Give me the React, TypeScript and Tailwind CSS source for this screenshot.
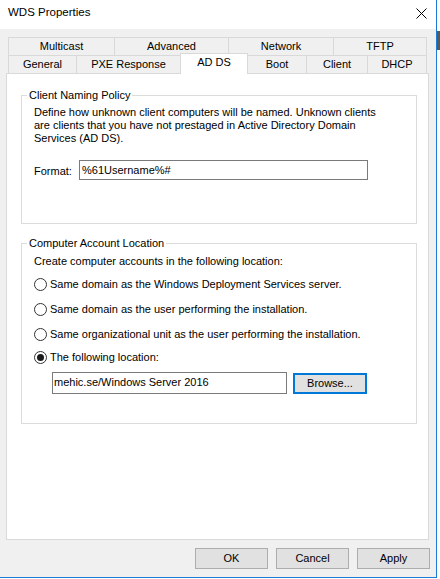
import clsx from 'clsx'

type TabItem = { label: string; cls: string; selected?: boolean }

const topRow: TabItem[] = [
  { label: 'Multicast', cls: 'w-[106px] border-l' },
  { label: 'Advanced', cls: 'w-[114px] border-l' },
  { label: 'Network', cls: 'w-[105px] border-l' },
  { label: 'TFTP', cls: 'w-[94px] border-l border-r' },
]

const bottomRow: TabItem[] = [
  { label: 'General', cls: 'w-[68px] border-l' },
  { label: 'PXE Response', cls: 'w-[104px] border-l' },
  { label: 'AD DS', cls: 'w-[68px] border-l border-r', selected: true },
  { label: 'Boot', cls: 'w-[58px]' },
  { label: 'Client', cls: 'w-[61px] border-l' },
  { label: 'DHCP', cls: 'w-[60px] border-l border-r' },
]

function Radio({ label, checked }: { label: string; checked?: boolean }) {
  return (
    <div className="flex h-[13px] items-center">
      <span className="flex h-[13px] w-[13px] items-center justify-center rounded-full border border-[#333333] bg-white">
        {checked && <span className="h-[7px] w-[7px] rounded-full bg-[#1a1a1a]" />}
      </span>
      <span className="ml-[3px] leading-[13px]">{label}</span>
    </div>
  )
}

function Button({ label, focused }: { label: string; focused?: boolean }) {
  return (
    <button
      type="button"
      className={clsx(
        'flex h-[21px] items-center justify-center bg-[#e1e1e1] leading-none text-black',
        focused ? 'w-[74px] border-2 border-[#0078d7]' : 'w-[73px] border border-[#adadad]',
      )}
    >
      {label}
    </button>
  )
}

export default function App() {
  return (
    <div className="flex h-[579px] w-[440px] overflow-hidden bg-white font-['Liberation_Sans',Arial,sans-serif] text-[11px] text-black">
      <div className="flex h-[578px] w-[437px] flex-col border-r border-b border-[#1c7cd5]">
        {/* title bar */}
        <div className="flex h-[29px] items-center justify-between bg-white pb-[3px] pl-[8px]">
          <span className="text-[11.5px]">WDS Properties</span>
          <svg width="11" height="11" viewBox="0 0 11 11" className="mr-[9px]">
            <path d="M0.5 0.5 L10.5 10.5 M10.5 0.5 L0.5 10.5" stroke="#000" strokeWidth="1" />
          </svg>
        </div>

        <div className="flex flex-1 flex-col bg-[#f0f0f0] pt-[8px] pr-[6px] pl-[6px]">
          {/* tabs */}
          <div className="ml-[2px] flex h-[18px]">
            {topRow.map((t) => (
              <div
                key={t.label}
                className={clsx('flex items-center justify-center border-t border-[#d9d9d9]', t.cls)}
              >
                {t.label}
              </div>
            ))}
          </div>
          <div className="ml-[2px] flex h-[18px] items-end">
            {bottomRow.map((t) => (
              <div
                key={t.label}
                className={clsx(
                  'flex items-center justify-center border-t border-[#d9d9d9]',
                  t.cls,
                  t.selected ? 'relative z-10 -mb-px h-[21px] bg-white pb-[3px]' : 'h-[18px]',
                )}
              >
                {t.label}
              </div>
            ))}
          </div>

          {/* panel */}
          <div className="h-[467px] w-[423px] border border-[#d9d9d9] bg-white px-[14px] pt-[14px]">
            <fieldset className="h-[136px] w-[396px] border border-[#dcdcdc]">
              <legend className="ml-[5px] px-[2px] leading-[15px]">Client Naming Policy</legend>
              <div className="px-[12px]">
                <p className="pt-[3px] leading-[13px]">
                  Define how unknown client computers will be named. Unknown clients
                  <br />
                  are clients that you have not prestaged in Active Directory Domain
                  <br />
                  Services (AD DS).
                </p>
                <div className="mt-[15px] flex items-center">
                  <span className="w-[45px] pt-[3px]">Format:</span>
                  <div className="flex h-[20px] w-[289px] items-center border border-[#7a7a7a] pl-[2px]">
                    %61Username%#
                  </div>
                </div>
              </div>
            </fieldset>

            <fieldset className="mt-[12px] h-[188px] w-[396px] border border-[#dcdcdc]">
              <legend className="ml-[5px] px-[2px] leading-[15px]">Computer Account Location</legend>
              <div className="px-[12px]">
                <p className="pt-[4px] leading-[13px]">Create computer accounts in the following location:</p>
                <div className="mt-[10px] flex flex-col gap-[12px]">
                  <Radio label="Same domain as the Windows Deployment Services server." />
                  <Radio label="Same domain as the user performing the installation." />
                  <Radio label="Same organizational unit as the user performing the installation." />
                </div>
                <div className="mt-[10px]">
                  <Radio label="The following location:" checked />
                </div>
                <div className="mt-[8px] ml-[18px] flex items-center gap-[6px]">
                  <div className="flex h-[22px] w-[235px] items-center border border-[#7a7a7a] pb-[2px] pl-[1px]">
                    mehic.se/Windows Server 2016
                  </div>
                  <Button label="Browse..." focused />
                </div>
              </div>
            </fieldset>
          </div>

          {/* dialog buttons */}
          <div className="mt-[8px] flex justify-end gap-[8px]">
            <Button label="OK" />
            <Button label="Cancel" />
            <Button label="Apply" />
          </div>
        </div>
      </div>

      {/* sliver of the window behind */}
      <div className="flex w-[3px] flex-col">
        <div className="h-[31px] bg-white" />
        <div className="h-[19px] bg-[#5a5a5a]" />
        <div className="flex-1 bg-white" />
      </div>
    </div>
  )
}
